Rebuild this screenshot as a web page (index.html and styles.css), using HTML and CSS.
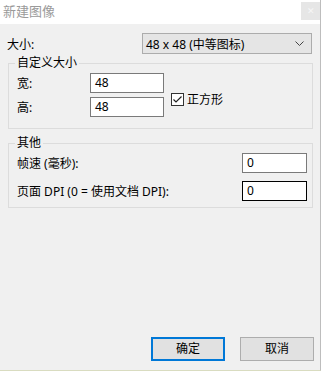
FILE: index.html
```html
<!DOCTYPE html>
<html lang="zh-CN">
<head>
    <meta charset="UTF-8">
    <title>新建图像</title>
    <link rel="stylesheet" href="styles.css">
</head>
<body>
    <div class="window">
        <div class="titlebar">
            <span class="title">新建图像</span>
            <span class="close">&#x2715;</span>
        </div>

        <div class="size-row">
            <span>大小:</span>
            <div class="select">
                <span>48 x 48 (中等图标)</span>
                <svg class="chevron" width="9" height="5" viewBox="0 0 9 5"><path d="M0.5 0.5 L4.5 4.5 L8.5 0.5" fill="none" stroke="#444" stroke-width="1"/></svg>
            </div>
        </div>

        <fieldset class="group custom">
            <legend>自定义大小</legend>
            <div class="custom-grid">
                <span class="label">宽:</span>
                <div class="input">48</div>
                <span class="label">高:</span>
                <div class="input">48</div>
                <label class="check">
                    <span class="box">
                        <svg width="11" height="11" viewBox="0 0 11 11"><path d="M1.5 5.5 L4 8 L9.5 2.5" fill="none" stroke="#222" stroke-width="1.2"/></svg>
                    </span>
                    正方形
                </label>
            </div>
        </fieldset>

        <fieldset class="group other">
            <legend>其他</legend>
            <div class="row">
                <span>帧速 (毫秒):</span>
                <div class="input small">0</div>
            </div>
            <div class="row">
                <span>页面 DPI (0 = 使用文档 DPI):</span>
                <div class="input small focus">0</div>
            </div>
        </fieldset>

        <div class="buttons">
            <div class="btn default">确定</div>
            <div class="btn">取消</div>
        </div>
    </div>
</body>
</html>
```

FILE: styles.css
```css
html, body {
    margin: 0;
    padding: 0;
}
body {
    font-family: "Noto Sans", "Noto Sans CJK SC", sans-serif;
    font-size: 12px;
    color: #000;
}
.window {
    width: 320px;
    height: 370px;
    background: #f0f0f0;
    border-right: 1px solid #bdbdbd;
    border-bottom: 1px solid #d9dcc0;
    display: flex;
    flex-direction: column;
}
.titlebar {
    height: 24px;
    background: #fff;
    display: flex;
    align-items: flex-start;
    justify-content: space-between;
}
.title {
    color: #9a9a9a;
    font-size: 13px;
    line-height: 14px;
    margin: 4px 0 0 3px;
}
.close {
    width: 19px;
    height: 18px;
    margin-top: 2px;
    background: #e6e6e6;
    color: #f6f6f6;
    font-size: 9px;
    line-height: 18px;
    text-align: center;
}
.size-row {
    display: flex;
    justify-content: space-between;
    align-items: center;
    margin-top: 9px;
    padding: 0 8px 0 7px;
    height: 21px;
}
.select {
    box-sizing: border-box;
    width: 170px;
    height: 21px;
    border: 1px solid #acacac;
    background: #e5e5e5;
    display: flex;
    align-items: center;
    justify-content: space-between;
    padding: 0 7px 0 3px;
}
.group {
    margin: 0 0 0 8px;
    width: 305px;
    box-sizing: border-box;
    border: 1px solid #dcdcdc;
    padding: 3px 5px 0 8px;
}
.group legend {
    padding: 0 2px;
    margin-left: -2px;
    line-height: 14px;
}
.custom {
    margin-top: 2px;
    padding-bottom: 11px;
}
.custom-grid {
    display: grid;
    grid-template-columns: 73px 74px auto;
    grid-template-rows: 20px 20px;
    row-gap: 4px;
    align-items: center;
}
.input {
    box-sizing: border-box;
    height: 20px;
    background: #fff;
    border: 1px solid #7a7a7a;
    padding: 0 4px;
    line-height: 18px;
}
.check {
    grid-column: 3;
    grid-row: 1 / 3;
    display: flex;
    align-items: center;
    margin: 8px 0 0 7px;
}
.box {
    box-sizing: border-box;
    width: 13px;
    height: 13px;
    border: 1px solid #333;
    background: #fff;
    display: flex;
    align-items: center;
    justify-content: center;
    margin-right: 3px;
}
.other {
    margin-top: 7px;
    padding-bottom: 6px;
}
.row {
    display: flex;
    justify-content: space-between;
    align-items: center;
    height: 20px;
    margin-bottom: 8px;
}
.row:last-child {
    margin-bottom: 0;
}
.input.small {
    width: 65px;
    padding-left: 4px;
}
.input.focus {
    border-color: #000;
}
.buttons {
    margin-top: auto;
    display: flex;
    justify-content: flex-end;
    gap: 15px;
    padding: 0 6px 9px 0;
}
.btn {
    box-sizing: border-box;
    width: 74px;
    height: 24px;
    border: 1px solid #adadad;
    background: #e1e1e1;
    text-align: center;
    line-height: 22px;
}
.btn.default {
    border: 2px solid #0078d7;
    line-height: 20px;
}
```
